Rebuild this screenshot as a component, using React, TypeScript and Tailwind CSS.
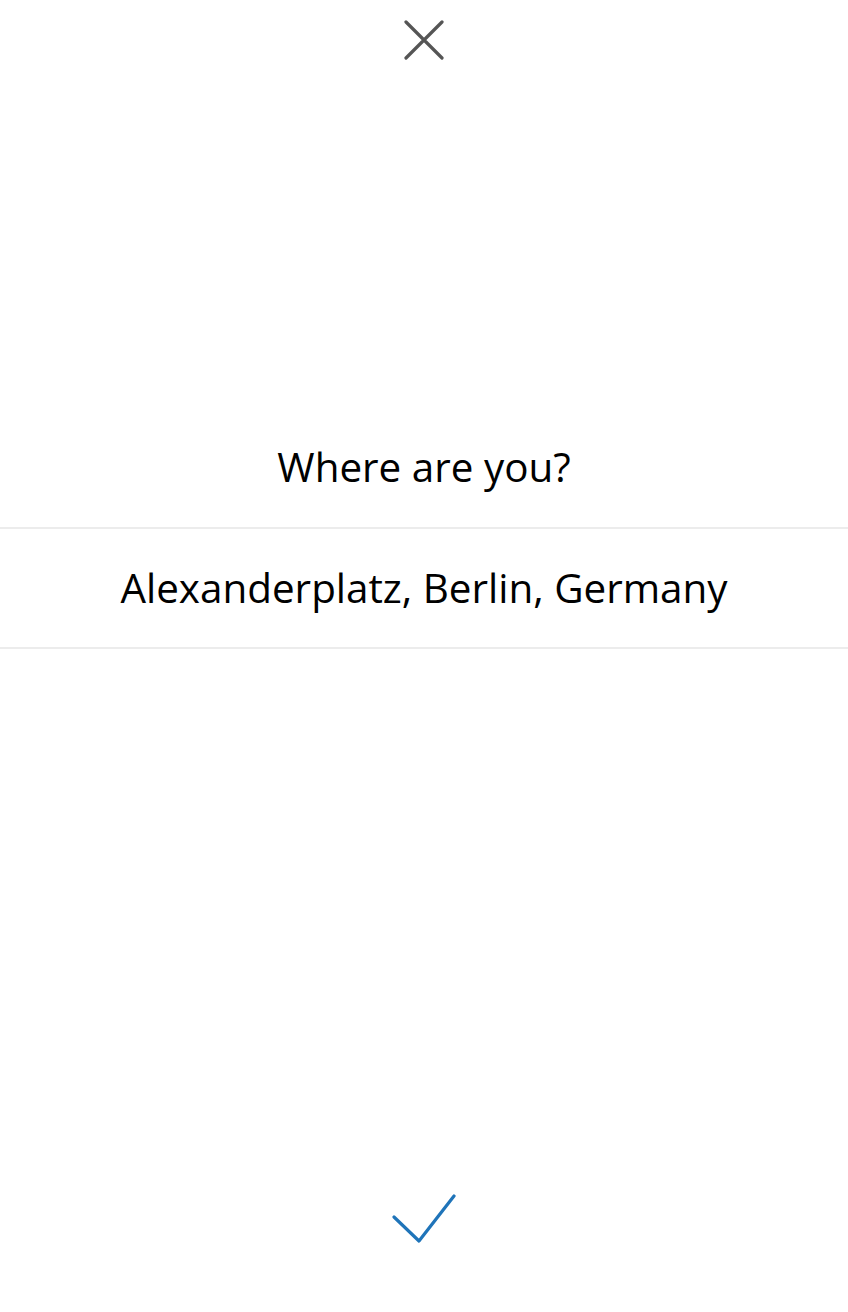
import React from "react";

export default function App() {
  return (
    <div
      className="flex h-[1312px] w-[848px] flex-col bg-white text-black"
      style={{ fontFamily: '"Open Sans", "Noto Sans", sans-serif' }}
    >
      <div className="flex justify-center pt-[20px]">
        <svg width="40" height="40" viewBox="0 0 40 40">
          <path
            d="M2 2 L38 38 M38 2 L2 38"
            stroke="#555555"
            strokeWidth="3.2"
            strokeLinecap="round"
            fill="none"
          />
        </svg>
      </div>
      <div className="mt-[383px] text-center text-[40.4px] leading-[48px]">Where are you?</div>
      <div className="mt-[36px] flex h-[122px] items-center justify-center border-y-2 border-[#ececec] text-[40.4px] leading-[48px]">
        Alexanderplatz, Berlin, Germany
      </div>
      <div className="flex-1" />
      <div className="flex justify-center pb-[68px]">
        <svg width="64" height="50" viewBox="0 0 64 50">
          <path
            d="M2 23 L27 47 L62 2"
            stroke="#1f74b9"
            strokeWidth="3.2"
            strokeLinecap="round"
            strokeLinejoin="round"
            fill="none"
          />
        </svg>
      </div>
    </div>
  );
}
